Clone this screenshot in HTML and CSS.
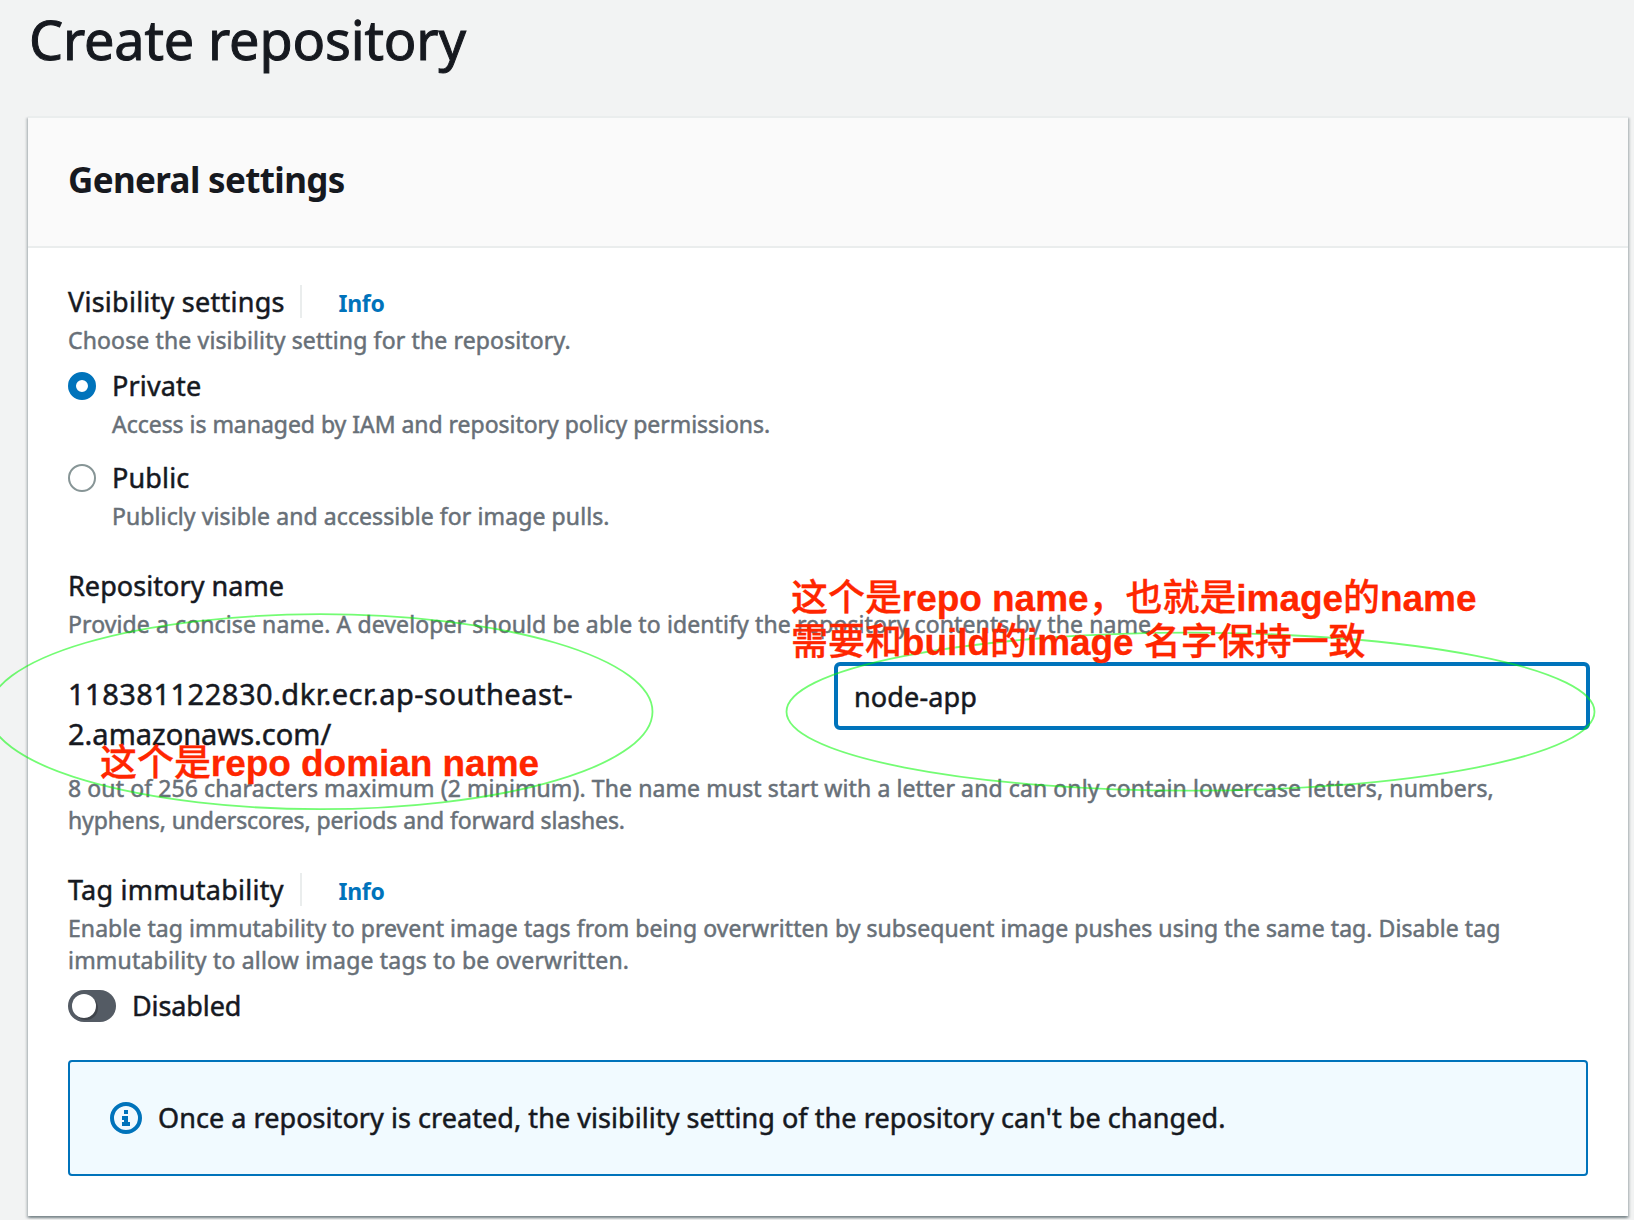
FILE: index.html
```html
<!DOCTYPE html>
<html lang="en">
<head>
<meta charset="utf-8">
<title>Create repository</title>
<link rel="stylesheet" href="styles.css">
</head>
<body>
<main class="page">
  <h1 class="page-title">Create repository</h1>
  <section class="card">
    <header class="card-header"><h2 class="card-title">General settings</h2></header>
    <div class="card-body">
      <div class="field">
        <div class="label-row">
          <span class="label label-visibility">Visibility settings</span>
          <a class="info">Info</a>
        </div>
        <p class="hint hint-wide">Choose the visibility setting for the repository.</p>
        <div class="option">
          <span class="radio radio-on"></span>
          <div>
            <div class="label label-option">Private</div>
            <p class="hint hint-access">Access is managed by IAM and repository policy permissions.</p>
          </div>
        </div>
        <div class="option option-next">
          <span class="radio"></span>
          <div>
            <div class="label label-option">Public</div>
            <p class="hint">Publicly visible and accessible for image pulls.</p>
          </div>
        </div>
      </div>

      <div class="field">
        <div class="label-row"><span class="label">Repository name</span></div>
        <p class="hint hint-name">Provide a concise name. A developer should be able to identify the repository contents by the name</p>
        <div class="name-row">
          <div class="domain"><span class="domain-host">118381122830.dkr.ecr.ap-southeast-</span><br>2.amazonaws.com/</div>
          <div class="input">node-app</div>
        </div>
        <p class="hint">8 out of 256 characters maximum (2 minimum). The name must start with a letter and can only contain lowercase letters, numbers,<br><span class="hint-tight">hyphens, underscores, periods and forward slashes.</span></p>
      </div>

      <div class="field">
        <div class="label-row">
          <span class="label label-visibility">Tag immutability</span>
          <a class="info">Info</a>
        </div>
        <p class="hint hint-tag">Enable tag immutability to prevent image tags from being overwritten by subsequent image pushes using the same tag. Disable tag<br><span class="hint-overwrite">immutability to allow image tags to be overwritten.</span></p>
        <div class="toggle-row">
          <span class="toggle"><span class="knob"></span></span>
          <span class="label label-toggle">Disabled</span>
        </div>
      </div>

      <div class="alert">
        <svg class="alert-icon" viewBox="0 0 32 32" aria-hidden="true">
          <circle cx="16" cy="16" r="14" fill="none" stroke="#0073bb" stroke-width="4"/>
          <path d="M14 8h4v4h-4zM12 14h6v6h2v4h-8v-4h2v-2h-2z" fill="#0073bb"/>
        </svg>
        <span class="label">Once a repository is created, the visibility setting of the repository can't be changed.</span>
      </div>
    </div>
  </section>

  <svg class="marks" viewBox="0 0 1634 1220" aria-hidden="true">
    <ellipse cx="320.5" cy="711.7" rx="332" ry="97.5"/>
    <ellipse cx="1190.5" cy="711.7" rx="404" ry="79"/>
  </svg>
  <div class="note note-name">这个是<b>repo name</b>，也就是<b>image</b>的<b>name</b><br>需要和<b>build</b>的<b>image </b>名字保持一致</div>
  <div class="note note-domain">这个是<b>repo domian name</b></div>
</main>
</body>
</html>
```
FILE: styles.css
```css
* { box-sizing: border-box; }

body {
  margin: 0;
  background: #f2f3f3;
  color: #16191f;
  font-family: "Noto Sans", "Open Sans", sans-serif;
  overflow: hidden;
}

h1, h2, p { margin: 0; font-weight: 400; }

.page {
  position: relative;
  height: 1220px;
  padding: 4px 6px 0 28px;
  overflow: hidden;
}

.page-title {
  height: 112px;
  padding-left: 1px;
  font-size: 54px;
  line-height: 70px;
  letter-spacing: -0.15px;
  -webkit-text-stroke: 1px;
}

.card {
  height: 1100px;
  background: #fff;
  border-top: 2px solid #eaeded;
  box-shadow: 0 2px 2px 0 rgba(0, 28, 36, .3), 2px 2px 2px 0 rgba(0, 28, 36, .15), -2px 2px 2px 0 rgba(0, 28, 36, .15);
}

.card-header {
  display: flex;
  align-items: center;
  height: 130px;
  padding: 0 40px 4px;
  background: #fafafa;
  border-bottom: 2px solid #eaeded;
}

.card-title {
  font-size: 35px;
  line-height: 44px;
  font-weight: 700;
  letter-spacing: -0.65px;
}

.card-body { padding: 36px 40px 0; }

.field { margin-bottom: 36px; }

.label-row {
  display: flex;
  margin-bottom: 4px;
}

.label {
  font-size: 27px;
  line-height: 36px;
  letter-spacing: 0.06px;
  -webkit-text-stroke: 0.5px;
}

.label-visibility {
  width: 232px;
  letter-spacing: 0.25px;
}

.label-option { letter-spacing: 0.15px; margin-bottom: 4px; }
.label-toggle { letter-spacing: -0.1px; }

.info {
  height: 33px;
  margin-top: 1px;
  padding-left: 36.5px;
  border-left: 2px solid #eaeded;
  color: #0073bb;
  font-size: 23px;
  line-height: 37px;
  font-weight: 700;
  letter-spacing: -0.3px;
}

.hint {
  color: #687078;
  font-size: 23px;
  line-height: 32px;
  letter-spacing: 0.1px;
  white-space: nowrap;
  -webkit-text-stroke: 0.5px;
}

.hint-wide { letter-spacing: 0.14px; }
.hint-name { letter-spacing: 0.11px; }
.hint-access { letter-spacing: -0.03px; }
.hint-tight { letter-spacing: -0.11px; }
.hint-tag { letter-spacing: 0.07px; }
.hint-overwrite { letter-spacing: 0.2px; }

.option {
  display: flex;
  gap: 16px;
  margin-top: 12px;
}

.option-next { margin-top: 20px; }

.radio {
  width: 28px;
  height: 28px;
  margin-top: 4px;
  border: 2px solid #879596;
  border-radius: 50%;
  background: #fff;
}

.radio-on { border: 8px solid #0073bb; }

.name-row {
  display: flex;
  justify-content: space-between;
  align-items: flex-start;
  height: 110px;
  margin: 22px -2px 0 0;
}

.domain {
  padding-top: 12px;
  font-size: 29px;
  line-height: 40px;
  -webkit-text-stroke: 0.5px;
}

.domain-host { letter-spacing: 0.5px; }

.input {
  width: 756px;
  height: 68px;
  padding: 0 16px;
  border: 4px solid #0073bb;
  border-radius: 6px;
  background: #fff;
  font-size: 27px;
  line-height: 62px;
  letter-spacing: 0.15px;
  -webkit-text-stroke: 0.5px;
}

.toggle-row {
  display: flex;
  align-items: center;
  gap: 16px;
  margin-top: 12px;
}

.toggle {
  width: 48px;
  height: 32px;
  padding: 4px;
  border-radius: 16px;
  background: #545b64;
}

.knob {
  display: block;
  width: 24px;
  height: 24px;
  border-radius: 50%;
  background: #fff;
  box-shadow: 2px 2px 0 rgba(0, 0, 0, .25);
}

.alert {
  display: flex;
  align-items: center;
  gap: 16px;
  height: 116px;
  padding: 0 40px;
  border: 2px solid #0073bb;
  border-radius: 4px;
  background: #f1faff;
}

.alert-icon { width: 32px; height: 32px; }

.marks {
  position: absolute;
  inset: 0;
  width: 1634px;
  height: 1220px;
  fill: none;
  stroke: rgba(0, 249, 0, .55);
  stroke-width: 1.8;
}

.note {
  position: absolute;
  color: #ff2600;
  font: 500 37px/44px "Noto Sans CJK SC", sans-serif;
  letter-spacing: -0.05px;
  white-space: nowrap;
  -webkit-text-stroke: 0.3px;
}

.note b {
  font-family: "Liberation Sans", "Noto Sans CJK SC", sans-serif;
  font-weight: 700;
  line-height: 1;
  -webkit-text-stroke: 0.3px;
}

.note-name { left: 791px; top: 573px; }
.note-domain { left: 100px; top: 738px; }
```
